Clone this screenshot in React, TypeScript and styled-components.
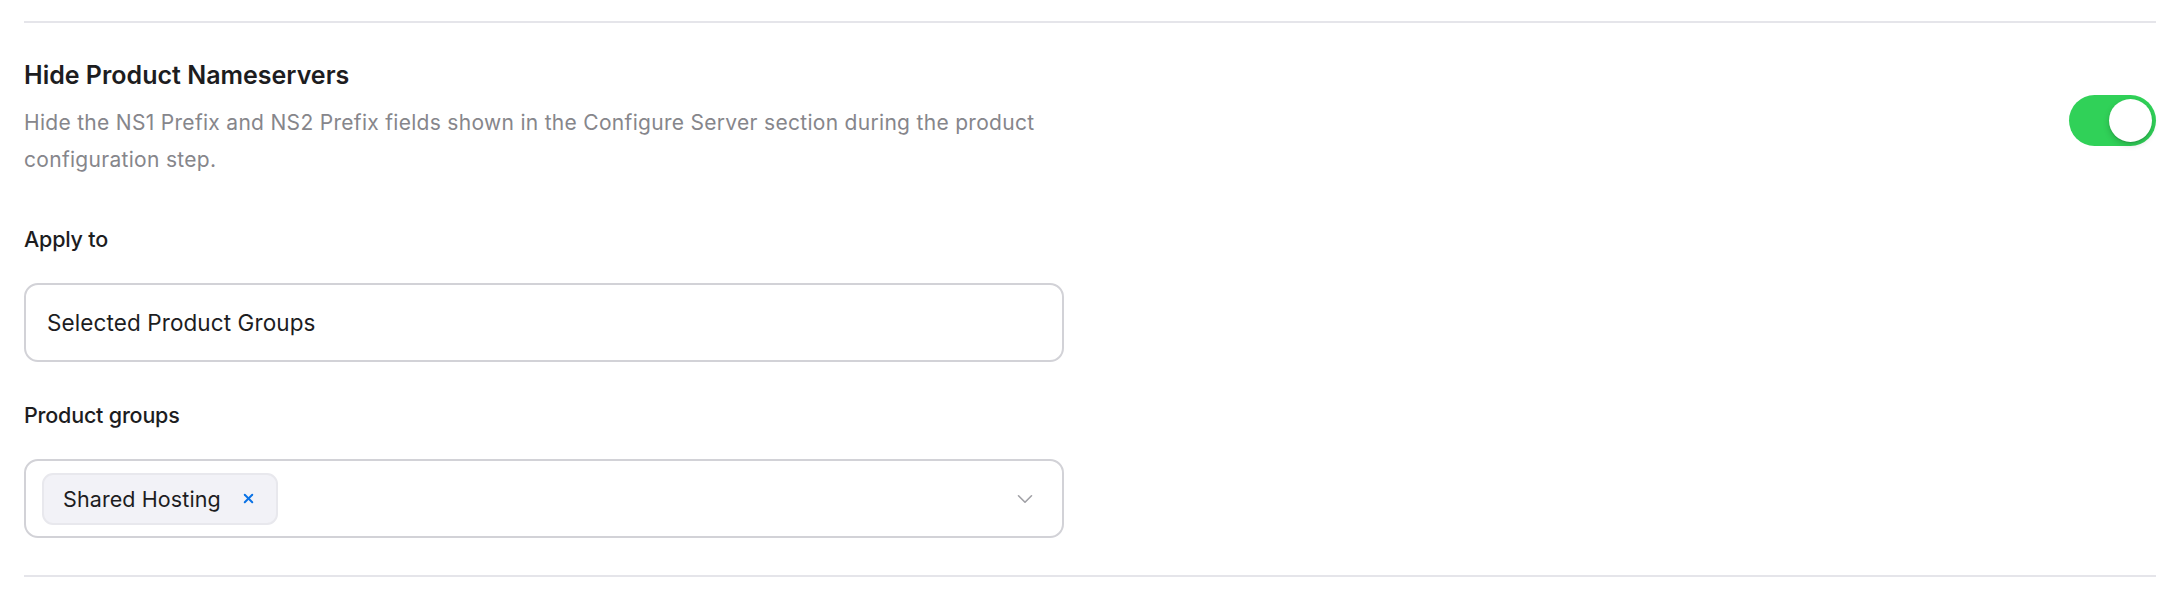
import React from "react";
import styled, { createGlobalStyle } from "styled-components";
import { X, ChevronDown } from "lucide-react";

const GlobalStyle = createGlobalStyle`
  body {
    margin: 0;
    background: #ffffff;
    font-family: Inter, "Noto Sans", "Liberation Sans", sans-serif;
    color: #1d1d1f;
    -webkit-font-smoothing: antialiased;
  }
`;

const Page = styled.div`
  padding: 21px 24px 0;
`;

const Divider = styled.div`
  height: 2px;
  background: #e5e5ea;
`;

const Section = styled.section`
  padding: 36px 0 37px;
`;

const HeaderRow = styled.div`
  display: flex;
  align-items: center;
  justify-content: space-between;
`;

const HeaderText = styled.div`
  max-width: 1040px;
`;

const Title = styled.h3`
  margin: 0 0 13px;
  font-size: 25px;
  line-height: 32px;
  font-weight: 600;
  letter-spacing: 0;
`;

const Description = styled.p`
  margin: 0;
  font-size: 21px;
  line-height: 37px;
  letter-spacing: 0.3px;
  color: #86868b;
`;

const Toggle = styled.button<{ $on: boolean }>`
  position: relative;
  width: 87px;
  height: 51px;
  border: none;
  border-radius: 26px;
  padding: 0;
  margin-top: 4px;
  background: ${(p) => (p.$on ? "#30d158" : "#e5e5ea")};
  cursor: pointer;

  &::after {
    content: "";
    position: absolute;
    top: 4px;
    left: ${(p) => (p.$on ? "40px" : "4px")};
    width: 43px;
    height: 43px;
    border-radius: 50%;
    background: #ffffff;
    box-shadow: 0 3px 6px rgba(0, 0, 0, 0.18), 0 1px 1px rgba(0, 0, 0, 0.12);
  }
`;

const Fields = styled.div`
  display: flex;
  flex-direction: column;
  gap: 37px;
  margin-top: 45px;
`;

const Field = styled.div`
  width: 1040px;
  display: flex;
  flex-direction: column;
  gap: 27px;
`;

const Label = styled.label`
  font-size: 21.5px;
  line-height: 33px;
  font-weight: 500;
  letter-spacing: -0.2px;
`;

const Box = styled.div`
  box-sizing: border-box;
  height: 79px;
  border: 2px solid #d2d2d7;
  border-radius: 14px;
  display: flex;
  align-items: center;
  padding: 0 24px 0 16px;
  font-size: 22.5px;
  letter-spacing: 0.1px;
`;

const BoxText = styled.span`
  padding-left: 5px;
`;

const Chip = styled.span`
  box-sizing: border-box;
  display: inline-flex;
  align-items: center;
  gap: 20px;
  height: 52px;
  padding: 0 20px 0 19px;
  background: #f2f2f7;
  border: 2px solid #e8e8ed;
  border-radius: 11px;
  font-size: 21.5px;
  letter-spacing: 0.1px;
  color: #1d1d1f;
`;

const ChipClose = styled.span`
  display: inline-flex;
  color: #0a72e5;
`;

const Chevron = styled.span`
  margin-left: auto;
  display: inline-flex;
  color: #a1a1a6;
`;

export default function App() {
  return (
    <Page>
      <GlobalStyle />
      <Divider />
      <Section>
        <HeaderRow>
          <HeaderText>
            <Title>Hide Product Nameservers</Title>
            <Description>
              Hide the NS1 Prefix and NS2 Prefix fields shown in the Configure Server section during the product
              configuration step.
            </Description>
          </HeaderText>
          <Toggle $on aria-label="Hide Product Nameservers" />
        </HeaderRow>
        <Fields>
          <Field>
            <Label>Apply to</Label>
            <Box>
              <BoxText>Selected Product Groups</BoxText>
            </Box>
          </Field>
          <Field>
            <Label>Product groups</Label>
            <Box>
              <Chip>
                Shared Hosting
                <ChipClose>
                  <X size={15} strokeWidth={3.2} />
                </ChipClose>
              </Chip>
              <Chevron>
                <ChevronDown size={26} strokeWidth={1.5} />
              </Chevron>
            </Box>
          </Field>
        </Fields>
      </Section>
      <Divider />
    </Page>
  );
}
